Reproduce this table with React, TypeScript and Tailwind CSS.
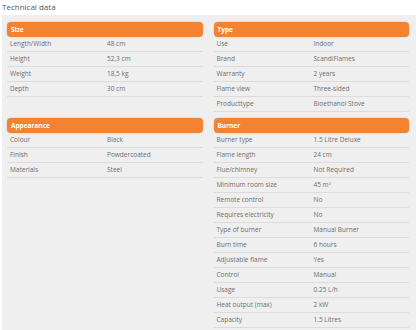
import React from "react";

type Row = [string, React.ReactNode];

interface Section {
  title: string;
  rows: Row[];
}

const left: Section[] = [
  {
    title: "Size",
    rows: [
      ["Length/Width", "48 cm"],
      ["Height", "52,3 cm"],
      ["Weight", "18,5 kg"],
      ["Depth", "30 cm"],
    ],
  },
  {
    title: "Appearance",
    rows: [
      ["Colour", "Black"],
      ["Finish", "Powdercoated"],
      ["Materials", "Steel"],
    ],
  },
];

const right: Section[] = [
  {
    title: "Type",
    rows: [
      ["Use", "Indoor"],
      ["Brand", "ScandiFlames"],
      ["Warranty", "2 years"],
      ["Flame view", "Three-sided"],
      ["Producttype", "Bioethanol Stove"],
    ],
  },
  {
    title: "Burner",
    rows: [
      ["Burner type", "1.5 Litre Deluxe"],
      ["Flame length", "24 cm"],
      ["Flue/chimney", "Not Required"],
      [
        "Minimum room size",
        <>
          45 m<sup className="text-[4px]">2</sup>
        </>,
      ],
      ["Remote control", "No"],
      ["Requires electricity", "No"],
      ["Type of burner", "Manual Burner"],
      ["Burn time", "6 hours"],
      ["Adjustable flame", "Yes"],
      ["Control", "Manual"],
      ["Usage", "0.25 L/h"],
      ["Heat output (max)", "2 kW"],
      ["Capacity", "1.5 Litres"],
    ],
  },
];

function SpecTable({ section }: { section: Section }) {
  return (
    <div className="flex flex-col">
      {/* Orange header bar */}
      <div className="flex h-[15px] items-center rounded-[4px] bg-[#f48233] pl-[4px] text-[6.5px] font-bold text-white shadow-[0_0_2px_rgba(0,0,0,0.18)]">
        {section.title}
      </div>
      {section.rows.map(([label, value]) => (
        <div
          key={label}
          className="grid h-[15px] grid-cols-[100px_1fr] items-center border-b border-[#dcdcdc] text-[6.5px] text-[#6e6e6e]"
        >
          <span className="pl-[3px]">{label}</span>
          <span>{value}</span>
        </div>
      ))}
    </div>
  );
}

export default function App() {
  return (
    <div
      className="h-[330px] w-[416px] overflow-hidden bg-white"
      style={{ fontFamily: '"Open Sans", "Noto Sans", sans-serif' }}
    >
      <div className="h-[15px] pl-[2px] text-[8px] leading-[13px] text-[#555]">
        Technical data
      </div>
      <div className="ml-[2px] grid h-[315px] grid-cols-2 content-start gap-x-[11px] gap-y-[6px] bg-[#efefef] pl-[5px] pr-[7px] pt-[7px]">
        <SpecTable section={left[0]} />
        <SpecTable section={right[0]} />
        <SpecTable section={left[1]} />
        <SpecTable section={right[1]} />
      </div>
    </div>
  );
}
